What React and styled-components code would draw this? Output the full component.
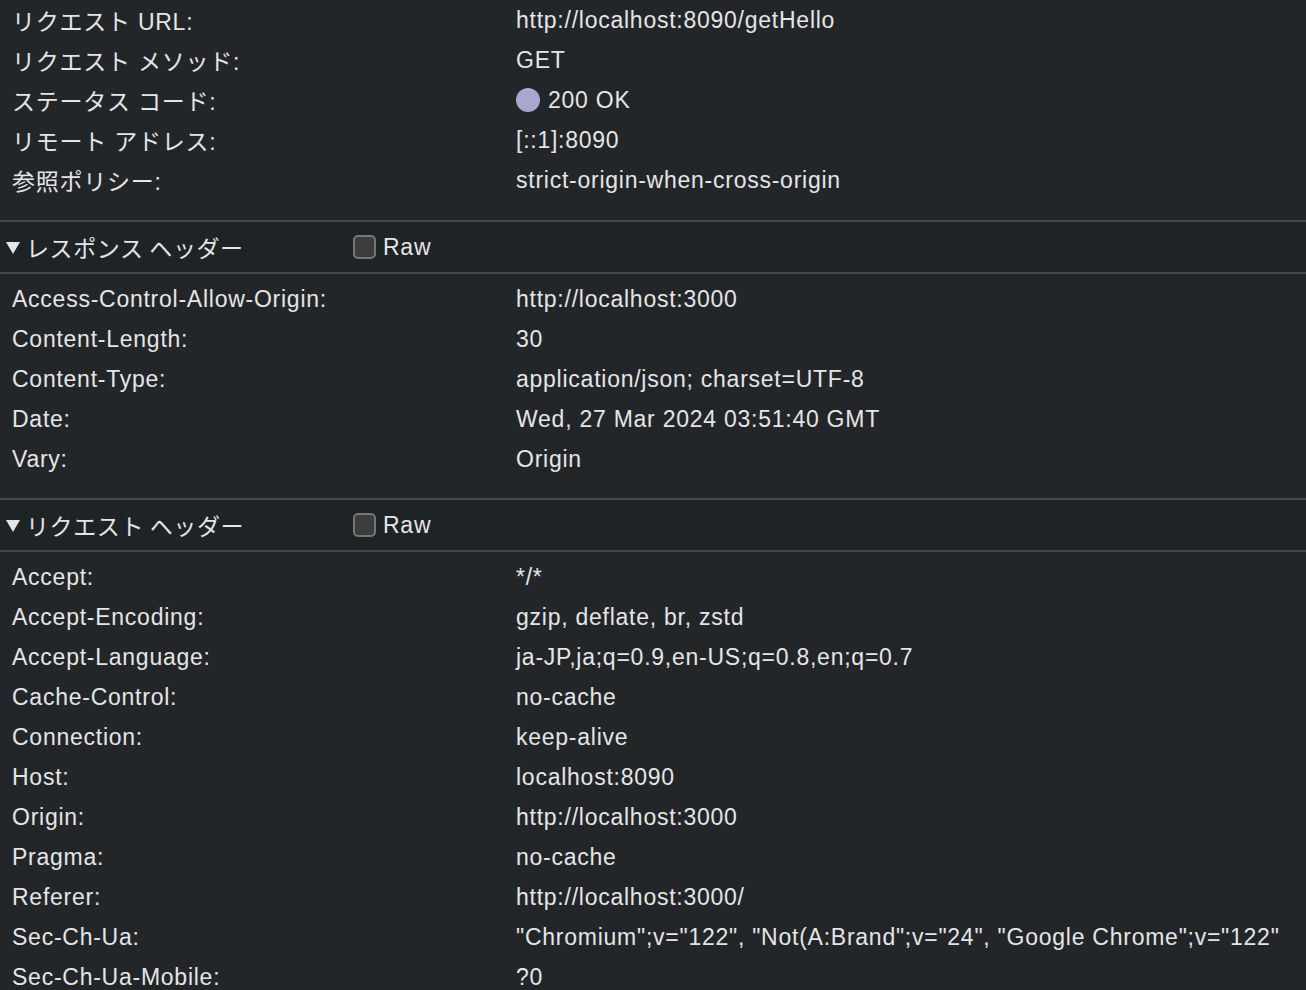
import React from "react";
import styled, { createGlobalStyle } from "styled-components";

const Global = createGlobalStyle`
  html, body { margin: 0; padding: 0; background: #232629; }
  body { font-family: "Liberation Sans", Arial, "Noto Sans CJK JP", sans-serif; }
`;

const Page = styled.div`
  background: #232629;
  color: #e4e5e7;
  font-size: 23px;
  letter-spacing: 0.75px;
  min-height: 990px;
  overflow: hidden;
`;

const Section = styled.section`
  border-top: ${(p) => (p.$header ? "2px solid #45484c" : "none")};
`;

const Header = styled.div`
  display: flex;
  align-items: center;
  height: 50px;
  background: #1e2326;
  border-bottom: 2px solid #45484c;
  padding-left: 6px;
`;

const Title = styled.div`
  display: flex;
  align-items: center;
  gap: 6px;
  width: 347px;
  font-family: "Noto Sans CJK JP", "Liberation Sans", sans-serif;
  font-size: 23px;
  letter-spacing: 0.6px;
`;

const Triangle = styled.span`
  width: 0;
  height: 0;
  border-left: 7px solid transparent;
  border-right: 7px solid transparent;
  border-top: 12px solid #e4e5e7;
  margin-top: 2px;
`;

const RawLabel = styled.label`
  display: flex;
  align-items: center;
  gap: 7px;
  font-size: 23px;
`;

const Box = styled.span`
  box-sizing: border-box;
  width: 23px;
  height: 24px;
  border: 2px solid #747679;
  border-radius: 5px;
  background: #3c3c3d;
`;

const Rows = styled.div`
  padding: ${(p) => (p.$header ? "5px 0 19px" : "0 0 20px")};
`;

const Row = styled.div`
  display: grid;
  grid-template-columns: 504px 1fr;
  height: 40px;
  align-items: center;
  padding-left: 12px;
  white-space: nowrap;
`;

const Label = styled.div`
  font-family: "Liberation Sans", Arial, "Noto Sans CJK JP", sans-serif;
`;

const Value = styled.div`
  display: flex;
  align-items: center;
  gap: 8px;
`;

const Dot = styled.span`
  width: 24px;
  height: 24px;
  border-radius: 50%;
  background: #a9a6d0;
`;

const general = [
  ["リクエスト URL:", "http://localhost:8090/getHello"],
  ["リクエスト メソッド:", "GET"],
  ["ステータス コード:", "200 OK", true],
  ["リモート アドレス:", "[::1]:8090"],
  ["参照ポリシー:", "strict-origin-when-cross-origin"],
];

const response = [
  ["Access-Control-Allow-Origin:", "http://localhost:3000"],
  ["Content-Length:", "30"],
  ["Content-Type:", "application/json; charset=UTF-8"],
  ["Date:", "Wed, 27 Mar 2024 03:51:40 GMT"],
  ["Vary:", "Origin"],
];

const request = [
  ["Accept:", "*/*"],
  ["Accept-Encoding:", "gzip, deflate, br, zstd"],
  ["Accept-Language:", "ja-JP,ja;q=0.9,en-US;q=0.8,en;q=0.7"],
  ["Cache-Control:", "no-cache"],
  ["Connection:", "keep-alive"],
  ["Host:", "localhost:8090"],
  ["Origin:", "http://localhost:3000"],
  ["Pragma:", "no-cache"],
  ["Referer:", "http://localhost:3000/"],
  ["Sec-Ch-Ua:", '"Chromium";v="122", "Not(A:Brand";v="24", "Google Chrome";v="122"'],
  ["Sec-Ch-Ua-Mobile:", "?0"],
];

function RowList({ items, header }) {
  return (
    <Rows $header={header}>
      {items.map(([k, v, dot]) => (
        <Row key={k}>
          <Label>{k}</Label>
          <Value>
            {dot && <Dot />}
            {v}
          </Value>
        </Row>
      ))}
    </Rows>
  );
}

function HeaderSection({ title, items }) {
  return (
    <Section $header>
      <Header>
        <Title>
          <Triangle />
          {title}
        </Title>
        <RawLabel>
          <Box />
          Raw
        </RawLabel>
      </Header>
      <RowList items={items} header />
    </Section>
  );
}

export default function App() {
  return (
    <Page>
      <Global />
      <Section>
        <RowList items={general} />
      </Section>
      <HeaderSection title="レスポンス ヘッダー" items={response} />
      <HeaderSection title="リクエスト ヘッダー" items={request} />
    </Page>
  );
}
